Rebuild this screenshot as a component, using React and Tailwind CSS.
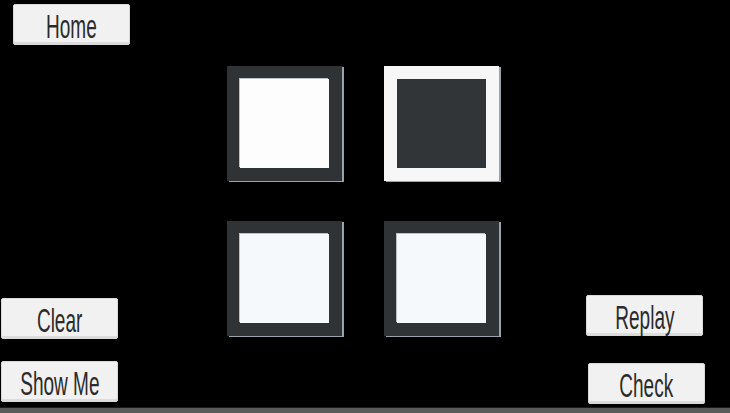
import React from "react";

const GameButton = ({ label, className }) => {
  return (
    <button
      className={`h-[41px] w-[117px] flex items-center justify-center bg-[#f1f1f1] rounded-[2px] border border-[#d8d8d8] shadow-[inset_0_-2px_0_#dcdcdc] ${className}`}
    >
      <span
        className="inline-block whitespace-nowrap scale-x-[0.56] text-[34px] leading-none text-[#2b2b2b] pt-[2px]"
        style={{ fontFamily: '"Liberation Sans", Arial, sans-serif' }}
      >
        {label}
      </span>
    </button>
  );
};

const Tile = ({ on, pure }) => {
  // on = white frame with dark centre, otherwise dark frame with light centre
  return (
    <div
      className={`size-[115px] flex items-center justify-center shadow-[2px_1px_0_#9aa3ab] ${
        on ? "bg-[#f7f7f7]" : "bg-[#2f3336]"
      }`}
    >
      <div
        className={`size-[89px] ${
          on
            ? "bg-[#313538]"
            : pure
            ? "bg-[#fdfdfd] shadow-[-1px_-1px_0_#b8c0c8]"
            : "bg-[#f6f9fc] shadow-[-1px_-1px_0_#b8c0c8]"
        }`}
      ></div>
    </div>
  );
};

const App = () => {
  const tiles = [
    { on: false, pure: true },
    { on: true },
    { on: false },
    { on: false },
  ];

  return (
    <div className="w-[730px] h-[413px] bg-black flex flex-col overflow-hidden">
      <div className="flex flex-1">
        {/* left column */}
        <div className="w-[227px] flex flex-col justify-between pt-[4px] pb-[5px]">
          <GameButton label="Home" className="ml-[13px]" />
          <div className="flex flex-col gap-[22px]">
            <GameButton label="Clear" className="ml-[1px]" />
            <GameButton label="Show Me" className="ml-[1px]" />
          </div>
        </div>

        {/* tiles */}
        <div className="pt-[66px]">
          <div className="grid grid-cols-2 gap-x-[42px] gap-y-[40px]">
            {tiles.map((t, idx) => (
              <Tile key={idx} on={t.on} pure={t.pure} />
            ))}
          </div>
        </div>

        {/* right column */}
        <div className="flex-1 flex flex-col justify-end pb-[3px] pl-[87px] gap-[27px]">
          <GameButton label="Replay" />
          <GameButton label="Check" className="ml-[2px]" />
        </div>
      </div>
      <div className="h-[6px] bg-[#5a5a5a] border-t border-[#1a1a1a]"></div>
    </div>
  );
};

export default App;
